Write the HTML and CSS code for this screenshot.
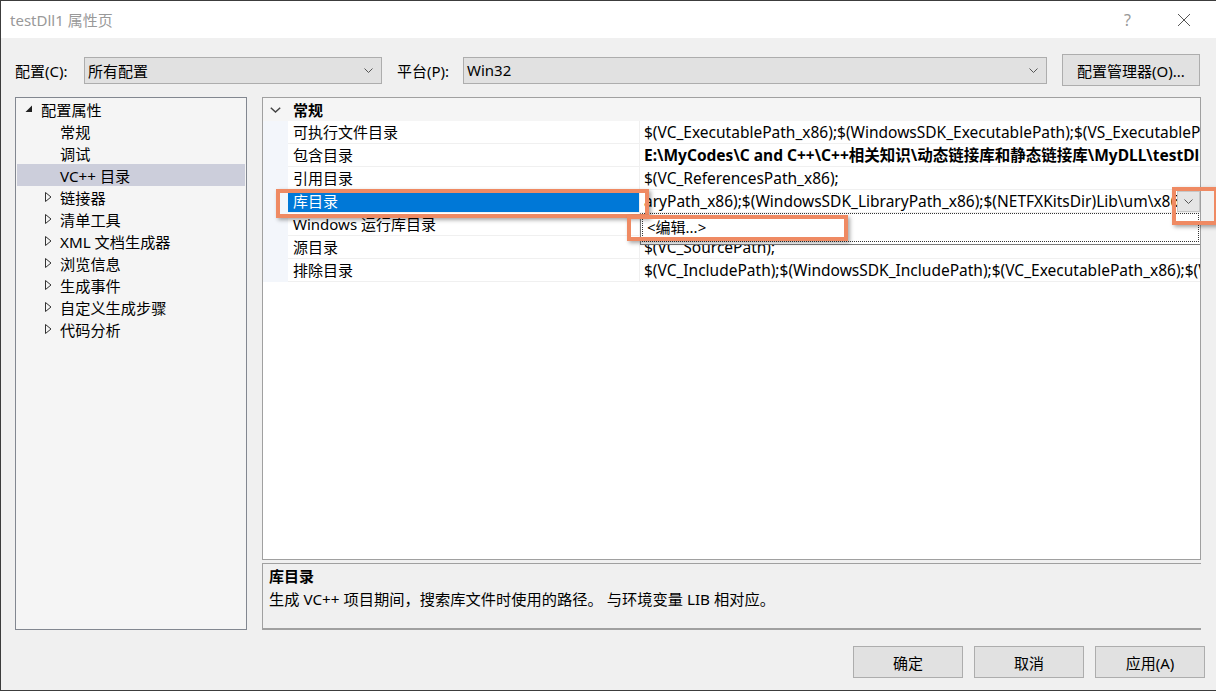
FILE: index.html
```html
<!DOCTYPE html>
<html lang="zh-CN">
<head>
    <meta charset="UTF-8">
    <title>testDll1 属性页</title>
    <link rel="stylesheet" href="styles.css">
</head>
<body>
    <div class="window">
        <div class="titlebar">
            <span class="title">testDll1 属性页</span>
            <span class="help">?</span>
            <span class="close">
                <svg width="14" height="14" viewBox="0 0 14 14"><path d="M1 1 L13 13 M13 1 L1 13" stroke="#555" stroke-width="1" fill="none"/></svg>
            </span>
        </div>

        <div class="content">
            <div class="config-row">
                <label class="label label-config">配置(C):</label>
                <div class="combo combo-config">
                    <span>所有配置</span>
                    <svg class="chev" width="9" height="5" viewBox="0 0 9 5"><polyline points="0.5,0.5 4.5,4.5 8.5,0.5" stroke="#555" fill="none"/></svg>
                </div>
                <label class="label label-platform">平台(P):</label>
                <div class="combo combo-platform">
                    <span>Win32</span>
                    <svg class="chev" width="9" height="5" viewBox="0 0 9 5"><polyline points="0.5,0.5 4.5,4.5 8.5,0.5" stroke="#555" fill="none"/></svg>
                </div>
                <button class="button manager">配置管理器(O)...</button>
            </div>

            <div class="main">
                <div class="tree">
                    <div class="node level0">
                        <span class="toggle"><svg width="8" height="8" viewBox="0 0 8 8"><polygon points="7,0.5 7,7 0.5,7" fill="#222"/></svg></span>配置属性
                    </div>
                    <div class="node level1"><span class="toggle"></span>常规</div>
                    <div class="node level1"><span class="toggle"></span>调试</div>
                    <div class="node level1 selected"><span class="toggle"></span>VC++ 目录</div>
                    <div class="node level1"><span class="toggle"><svg class="closed" width="7" height="10" viewBox="0 0 7 10"><polygon points="0.5,0.5 6,5 0.5,9.5" stroke="#333" fill="none"/></svg></span>链接器</div>
                    <div class="node level1"><span class="toggle"><svg class="closed" width="7" height="10" viewBox="0 0 7 10"><polygon points="0.5,0.5 6,5 0.5,9.5" stroke="#333" fill="none"/></svg></span>清单工具</div>
                    <div class="node level1"><span class="toggle"><svg class="closed" width="7" height="10" viewBox="0 0 7 10"><polygon points="0.5,0.5 6,5 0.5,9.5" stroke="#333" fill="none"/></svg></span>XML 文档生成器</div>
                    <div class="node level1"><span class="toggle"><svg class="closed" width="7" height="10" viewBox="0 0 7 10"><polygon points="0.5,0.5 6,5 0.5,9.5" stroke="#333" fill="none"/></svg></span>浏览信息</div>
                    <div class="node level1"><span class="toggle"><svg class="closed" width="7" height="10" viewBox="0 0 7 10"><polygon points="0.5,0.5 6,5 0.5,9.5" stroke="#333" fill="none"/></svg></span>生成事件</div>
                    <div class="node level1"><span class="toggle"><svg class="closed" width="7" height="10" viewBox="0 0 7 10"><polygon points="0.5,0.5 6,5 0.5,9.5" stroke="#333" fill="none"/></svg></span>自定义生成步骤</div>
                    <div class="node level1"><span class="toggle"><svg class="closed" width="7" height="10" viewBox="0 0 7 10"><polygon points="0.5,0.5 6,5 0.5,9.5" stroke="#333" fill="none"/></svg></span>代码分析</div>
                </div>

                <div class="right">
                    <div class="grid">
                        <div class="category">
                            <span class="gutter"><svg width="11" height="6" viewBox="0 0 11 6"><polyline points="0.8,0.8 5.5,5 10.2,0.8" stroke="#444" stroke-width="1.5" fill="none"/></svg></span>
                            <span class="category-name">常规</span>
                        </div>
                        <div class="prop">
                            <span class="gutter"></span>
                            <span class="name">可执行文件目录</span>
                            <span class="value">$(VC_ExecutablePath_x86);$(WindowsSDK_ExecutablePath);$(VS_ExecutablePath);$(MSBuild_ExecutablePath);$(SystemRoot)\SysWow64;$(FxCopDir);$(PATH);</span>
                        </div>
                        <div class="prop">
                            <span class="gutter"></span>
                            <span class="name">包含目录</span>
                            <span class="value bold">E:\MyCodes\C and C++\C++相关知识\动态链接库和静态链接库\MyDLL\testDll1\include;$(IncludePath)</span>
                        </div>
                        <div class="prop">
                            <span class="gutter"></span>
                            <span class="name">引用目录</span>
                            <span class="value">$(VC_ReferencesPath_x86);</span>
                        </div>
                        <div class="prop active">
                            <span class="gutter"></span>
                            <span class="name">库目录</span>
                            <span class="value edit">
                                <span class="edit-text">aryPath_x86);$(WindowsSDK_LibraryPath_x86);$(NETFXKitsDir)Lib\um\x86</span>
                                <span class="drop-btn"><svg width="9" height="5" viewBox="0 0 9 5"><polyline points="0.5,0.5 4.5,4.5 8.5,0.5" stroke="#555" fill="none"/></svg></span>
                            </span>
                        </div>
                        <div class="prop">
                            <span class="gutter"></span>
                            <span class="name">Windows 运行库目录</span>
                            <span class="value"></span>
                        </div>
                        <div class="prop">
                            <span class="gutter"></span>
                            <span class="name">源目录</span>
                            <span class="value">$(VC_SourcePath);</span>
                        </div>
                        <div class="prop">
                            <span class="gutter"></span>
                            <span class="name">排除目录</span>
                            <span class="value">$(VC_IncludePath);$(WindowsSDK_IncludePath);$(VC_ExecutablePath_x86);$(VC_LibraryPath_x86);$(VC_ReferencesPath_x86);</span>
                        </div>

                        <div class="dropdown">
                            <div class="dropdown-item">&lt;编辑...&gt;</div>
                        </div>
                    </div>

                    <div class="desc">
                        <div class="desc-title">库目录</div>
                        <div class="desc-text">生成 VC++ 项目期间，搜索库文件时使用的路径。 与环境变量 LIB 相对应。</div>
                    </div>
                </div>
            </div>

            <div class="footer">
                <button class="button action">确定</button>
                <button class="button action">取消</button>
                <button class="button action">应用(A)</button>
            </div>
        </div>

        <!-- 标注框 -->
        <div class="mark mark-row"></div>
        <div class="mark mark-edit"></div>
        <div class="mark mark-btn"></div>
    </div>
</body>
</html>
```

FILE: styles.css
```css
* {
    box-sizing: border-box;
}
html, body {
    margin: 0;
    padding: 0;
}
body {
    background-color: #f0f0f0;
    font-family: "Segoe UI", "Noto Sans", "Noto Sans CJK SC", sans-serif;
    font-size: 15px;
    color: #000;
}
.window {
    position: relative;
    width: 1216px;
    height: 691px;
    background-color: #f0f0f0;
    border-left: 1px solid #3c3c3c;
    border-top: 1px solid #3c3c3c;
    border-bottom: 1px solid #3c3c3c;
    display: flex;
    flex-direction: column;
    overflow: hidden;
}
.titlebar {
    height: 37px;
    background-color: #fff;
    display: flex;
    align-items: center;
    padding-left: 9px;
    flex-shrink: 0;
}
.title {
    color: #999;
    flex: 1;
}
.help {
    color: #999;
    font-size: 16px;
    margin-right: 46px;
}
.close {
    width: 14px;
    height: 14px;
    margin-right: 25px;
    display: flex;
}
.content {
    flex: 1;
    display: flex;
    flex-direction: column;
    padding: 16px 15px 0 14px;
}

/* 配置行 */
.config-row {
    display: flex;
    align-items: center;
    height: 32px;
}
.label {
    white-space: nowrap;
}
.label-config {
    width: 69px;
}
.label-platform {
    width: 66px;
    margin-left: 15px;
}
.combo {
    height: 27px;
    background-color: #e1e1e1;
    border: 1px solid #adadad;
    display: flex;
    align-items: center;
    justify-content: space-between;
    padding: 0 8px 0 3px;
}
.combo-config {
    width: 298px;
}
.combo-platform {
    width: 584px;
}
.button {
    font-family: inherit;
    font-size: 15px;
    color: #000;
    background-color: #e1e1e1;
    border: 1px solid #adadad;
    padding: 0;
    height: 32px;
    cursor: pointer;
}
.manager {
    width: 138px;
    margin-left: 15px;
}

/* 主体 */
.main {
    display: flex;
    margin-top: 11px;
    height: 533px;
}
.tree {
    width: 232px;
    background-color: #f5f5f5;
    border: 1px solid #828790;
    padding: 0 1px;
    font-size: 15.2px;
}
.node {
    height: 22px;
    display: flex;
    align-items: center;
    white-space: nowrap;
}
.node.level0 {
    padding-left: 8px;
}
.node.level0 .toggle {
    width: 16px;
}
.node.level1 {
    padding-left: 28px;
}
.node.level1 .toggle {
    width: 15px;
}
.toggle {
    display: flex;
    align-items: center;
    height: 22px;
}
.node.selected {
    background-color: #cccedb;
}
.right {
    margin-left: 15px;
    width: 939px;
    display: flex;
    flex-direction: column;
}
.grid {
    position: relative;
    height: 463px;
    background-color: #fff;
    border: 1px solid #a0a0a0;
    overflow: hidden;
}
.category {
    height: 23px;
    display: flex;
    align-items: center;
    background-color: #f5f5f5;
}
.category .gutter {
    background-color: #f5f5f5;
    padding-left: 7px;
}
.category-name {
    font-weight: bold;
    padding-left: 5px;
}
.gutter {
    width: 25px;
    height: 100%;
    flex-shrink: 0;
    display: flex;
    align-items: center;
    background-color: #f3f6fb;
}
.prop {
    height: 23px;
    display: flex;
}
.prop .name {
    width: 352px;
    flex-shrink: 0;
    padding-left: 5px;
    border-bottom: 1px solid #f0f0f0;
    border-right: 1px solid #f0f0f0;
    line-height: 22px;
    white-space: nowrap;
}
.prop .value {
    flex: 1;
    min-width: 0;
    padding-left: 4px;
    border-bottom: 1px solid #f0f0f0;
    line-height: 22px;
    white-space: nowrap;
    overflow: hidden;
    font-size: 15.5px;
}
.value.bold {
    font-weight: bold;
}
.prop.active .name {
    background-color: #0078d7;
    color: #fff;
}
.value.edit {
    display: flex;
    align-items: center;
    padding-right: 0;
}
.edit-text {
    flex: 1;
    min-width: 0;
    overflow: hidden;
}
.drop-btn {
    width: 23px;
    height: 21px;
    background-color: #e5e5e5;
    border: 1px solid #c6c6c6;
    display: flex;
    align-items: center;
    justify-content: center;
    flex-shrink: 0;
}

/* 下拉列表 */
.dropdown {
    position: absolute;
    left: 377px;
    top: 115px;
    width: 561px;
    height: 32px;
    background-color: #fff;
    border: 1px solid #7a7a7a;
    border-top: none;
    padding: 0 1px 2px 1px;
}
.dropdown-item {
    height: 100%;
    border: 1px dotted #333;
    padding-left: 4px;
    line-height: 26px;
}

/* 说明 */
.desc {
    margin-top: 3px;
    height: 67px;
    border: 1px solid #a0a0a0;
    border-bottom: 2px solid #a0a0a0;
    border-right: none;
    padding: 1px 6px;
}
.desc-title {
    font-weight: bold;
    line-height: 22px;
}
.desc-text {
    line-height: 24px;
    font-size: 15.25px;
}

/* 底部按钮 */
.footer {
    display: flex;
    justify-content: flex-end;
    gap: 11px;
    margin-top: 16px;
    margin-right: -4px;
}
.action {
    width: 110px;
}

/* 标注框 */
.mark {
    position: absolute;
    border: 4px solid #ef8a63;
    box-shadow: 2px 2px 4px rgba(0, 0, 0, 0.35);
}
.mark-row {
    left: 275px;
    top: 188px;
    width: 373px;
    height: 29px;
}
.mark-edit {
    left: 626px;
    top: 214px;
    width: 221px;
    height: 26px;
}
.mark-btn {
    left: 1171px;
    top: 186px;
    width: 46px;
    height: 38px;
}
```
